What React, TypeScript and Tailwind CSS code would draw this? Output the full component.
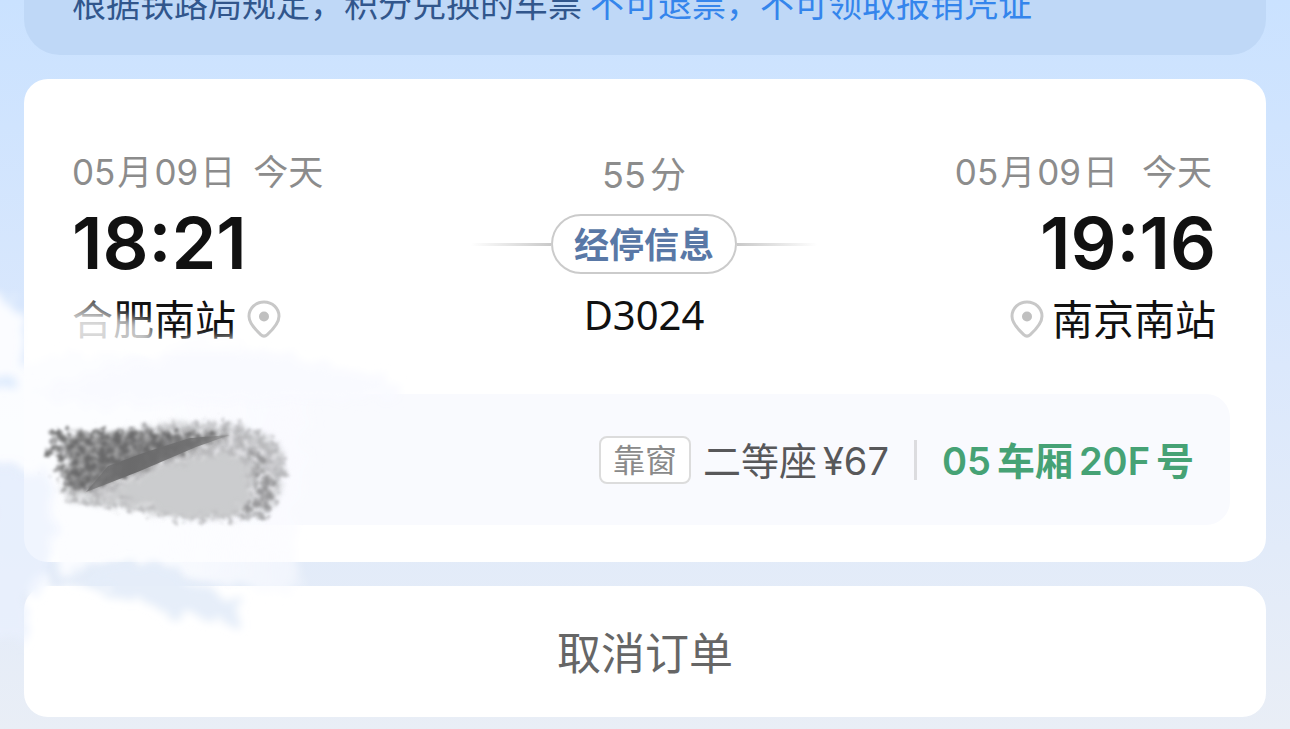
const PinIcon = () => (
  <svg viewBox="0 0 34 38" className="h-[38px] w-[34px] shrink-0" fill="none" aria-hidden="true">
    <path
      d="M17 2C8.600 2 2 8.400 2 16.200C2 22.400 8.300 29.600 13.700 34.600C15.800 36.500 18.200 36.500 20.300 34.600C25.700 29.600 32 22.400 32 16.200C32 8.400 25.400 2 17 2Z"
      stroke="#c8c8c8"
      strokeWidth="3"
    />
    <circle cx="17" cy="16.500" r="5" fill="#c0c0c0" />
  </svg>
);

const Smudge = () => (
  <svg
    className="pointer-events-none absolute top-0 left-0 h-[729px] w-[480px]"
    viewBox="0 0 480 729"
    aria-hidden="true"
  >
    <defs>
      <linearGradient id="wash" x1="0" y1="0" x2="1" y2="0">
        <stop offset="0.45" stopColor="#fcfdff" />
        <stop offset="1" stopColor="#fafbfe" stopOpacity="0.6" />
      </linearGradient>
      <linearGradient id="wedge" x1="0" y1="0" x2="1" y2="0">
        <stop offset="0" stopColor="#707071" stopOpacity="0.6" />
        <stop offset="0.3" stopColor="#6a6a6b" />
        <stop offset="0.8" stopColor="#707071" stopOpacity="0.8" />
        <stop offset="1" stopColor="#808081" stopOpacity="0.3" />
      </linearGradient>
      <filter id="soft" x="-20%" y="-20%" width="140%" height="140%">
        <feTurbulence type="fractalNoise" baseFrequency="0.06" numOctaves="4" seed="4" />
        <feDisplacementMap in="SourceGraphic" scale="26" xChannelSelector="R" yChannelSelector="G" />
        <feGaussianBlur stdDeviation="4" />
      </filter>
      <filter id="fade" x="-30%" y="-50%" width="160%" height="200%">
        <feGaussianBlur stdDeviation="6" />
      </filter>
      <filter id="grain" x="-20%" y="-30%" width="140%" height="160%" colorInterpolationFilters="sRGB">
        <feTurbulence type="fractalNoise" baseFrequency="0.14" numOctaves="3" seed="8" result="n" />
        <feDisplacementMap in="SourceGraphic" in2="n" scale="26" xChannelSelector="R" yChannelSelector="G" result="d" />
        <feColorMatrix in="n" type="matrix" values="0 0 0 0 0  0 0 0 0 0  0 0 0 0 0  0 0 3 0 -0.900" result="m" />
        <feComposite in="d" in2="m" operator="in" />
        <feGaussianBlur stdDeviation="1.500" />
      </filter>
      <filter id="rough" x="-20%" y="-30%" width="140%" height="160%">
        <feTurbulence type="fractalNoise" baseFrequency="0.12" numOctaves="3" seed="3" result="n" />
        <feDisplacementMap in="SourceGraphic" in2="n" scale="20" xChannelSelector="R" yChannelSelector="G" />
        <feGaussianBlur stdDeviation="2.500" />
      </filter>
    </defs>
    <g filter="url(#soft)">
      <path d="M-20 300L12 296L24 320L24 366L70 350L310 380L310 460L292 550L305 590L210 584L120 556L60 574L52 530L40 470L-20 462Z" fill="url(#wash)" opacity="0.96" />
      <path d="M30 580L90 592L150 620L110 650L40 660Z" fill="#ffffff" />
    </g>
    <g filter="url(#soft)">
      <path d="M30 392L90 374L200 343L290 356L400 385L400 400L90 404Z" fill="#f8faff" opacity="0.9" />
      <path d="M70 584L110 562L155 563L200 588L238 600L235 622L170 614L120 596Z" fill="#e5edf9" opacity="0.95" />
      <path d="M-10 370L20 382L20 392L-10 388Z" fill="#dceafd" />
      <path d="M-10 462L50 475L55 540L42 590L26 600L26 640L-10 640Z" fill="#e9f1fd" opacity="0.700" />
    </g>
    <g filter="url(#fade)">
      <path d="M66 312L112 314L152 322L156 344L156 352L66 352Z" fill="#ffffff" opacity="0.750" />
      <path d="M60 294L106 298L112 344L60 344Z" fill="#ffffff" opacity="0.400" />
      <path d="M160 342L245 336L245 352L160 352Z" fill="#ffffff" opacity="0.700" />
    </g>
    <path d="M110 430L190 422L240 426L276 440L286 464L280 500L264 516L190 520L70 500L60 488L90 470Z" fill="#cfd0d3" opacity="0.650" filter="url(#rough)" />
    <path d="M130 430L150 424L232 421L276 438L288 464L276 502L262 518L190 521L70 500L60 488L72 460Z" fill="#a2a2a5" opacity="0.650" filter="url(#grain)" />
    <path d="M240 440L264 460L274 486L268 514L238 514L258 496L256 472Z" fill="#88888a" opacity="0.700" filter="url(#grain)" />
    <path d="M110 494L160 468L222 454L250 466L248 502L225 516L180 516Z" fill="#cbccce" filter="url(#rough)" />
    <path d="M66 435L120 433L225 437L195 447L90 490L68 488L70 478L62 474L72 462L62 456Z" fill="#858586" opacity="0.750" filter="url(#rough)" />
    <path d="M54 431L120 430L232 434L200 445L88 491L58 492L70 478L46 474L72 462L44 456Z" fill="#656566" opacity="0.900" filter="url(#grain)" />
    <path d="M86 492L108 466L146 452L190 438L230 435L196 447L140 471Z" fill="url(#wedge)" />
  </svg>
);

const dateRow = "flex text-[35px] leading-[42px] text-[#8c8c8c]";
const timeText = "mt-[18px] text-[72px] leading-[64px] font-semibold text-[#111]";
const stationText = "mt-5 flex items-center text-[41px] leading-[48px] text-[#111]";

const DateText = () => (
  <span className="flex gap-0.5">
    <span>05</span>
    <span>月</span>
    <span>09</span>
    <span>日</span>
  </span>
);

export default function App() {
  return (
    <main className="relative min-h-screen overflow-hidden bg-linear-to-b from-[#cae2ff] via-[#dbe8fc] to-[#e9eef6] px-6 pb-3 font-[Inter,'Noto_Sans_CJK_SC',sans-serif]">
      <section className="flex h-[55px] items-end overflow-hidden rounded-b-[36px] bg-[#bfd8f7] px-12 pb-[30px]">
        <p className="text-[34px] leading-[40px] whitespace-nowrap text-[#31568c]">
          根据铁路局规定，积分兑换的车票
          <span className="ml-2 text-[#3485ec]">不可退票，不可领取报销凭证</span>
        </p>
      </section>

      <section className="mt-6 rounded-3xl bg-white px-9 pt-[72px] pb-[37px]">
        <div className="grid grid-cols-[1fr_auto_1fr] pr-[14px] pl-3">
          <div>
            <div className={dateRow + " gap-[18px]"}>
              <DateText />
              <span>今天</span>
            </div>
            <div className={timeText}>18:21</div>
            <div className={stationText + " gap-[11px]"}>
              <span className="pt-[2px] leading-[46px]">合肥南站</span>
              <PinIcon />
            </div>
          </div>

          <div className="flex flex-col items-center pt-1">
            <div className="flex gap-1 text-[36px] leading-[40px] text-[#8c8c8c]">
              <span>55</span>
              <span>分</span>
            </div>
            <div className="mt-[19px] flex items-center">
              <span className="h-[3px] w-20 bg-linear-to-r from-transparent to-[#c9c9c9]" />
              <button
                type="button"
                className="h-[60px] rounded-full border-2 border-[#cbcbcb] px-[21px] pt-[2px] text-[35px] leading-[40px] font-bold text-[#5978a6]"
              >
                经停信息
              </button>
              <span className="h-[3px] w-20 bg-linear-to-r from-[#c9c9c9] to-transparent" />
            </div>
            <div className="mt-[18px] font-['Noto_Sans',sans-serif] text-[40px] leading-[46px] text-[#111]">D3024</div>
          </div>

          <div className="flex flex-col items-end">
            <div className={dateRow + " gap-6 pr-1"}>
              <DateText />
              <span>今天</span>
            </div>
            <div className={timeText}>19:16</div>
            <div className={stationText + " gap-2"}>
              <PinIcon />
              <span className="pt-[2px] leading-[46px]">南京南站</span>
            </div>
          </div>
        </div>

        <div className="mt-[51px] flex h-[131px] items-center justify-end rounded-3xl bg-[#f9fafe] pr-9 text-[38px] leading-[48px]">
          <span className="flex h-12 items-center rounded-lg border-2 border-[#dcdcdc] bg-white px-3 pt-[2px] text-[32px] text-[#8a8a8a]">
            靠窗
          </span>
          <span className="ml-3 flex gap-1.5 pt-[2px] text-[#58585a]">
            <span>二等座</span>
            <span>¥67</span>
          </span>
          <span className="mx-[25px] h-10 w-[3px] bg-[#dcdcdf]" />
          <span className="flex gap-1.5 pt-[2px] font-semibold text-[#46a275]">
            <span>05</span>
            <span>车厢</span>
            <span>20F</span>
            <span>号</span>
          </span>
        </div>
      </section>

      <button
        type="button"
        className="mt-6 block h-[131px] w-full rounded-3xl bg-white pt-1 text-[44px] leading-[56px] text-[#666]"
      >
        取消订单
      </button>
      <Smudge />
    </main>
  );
}
